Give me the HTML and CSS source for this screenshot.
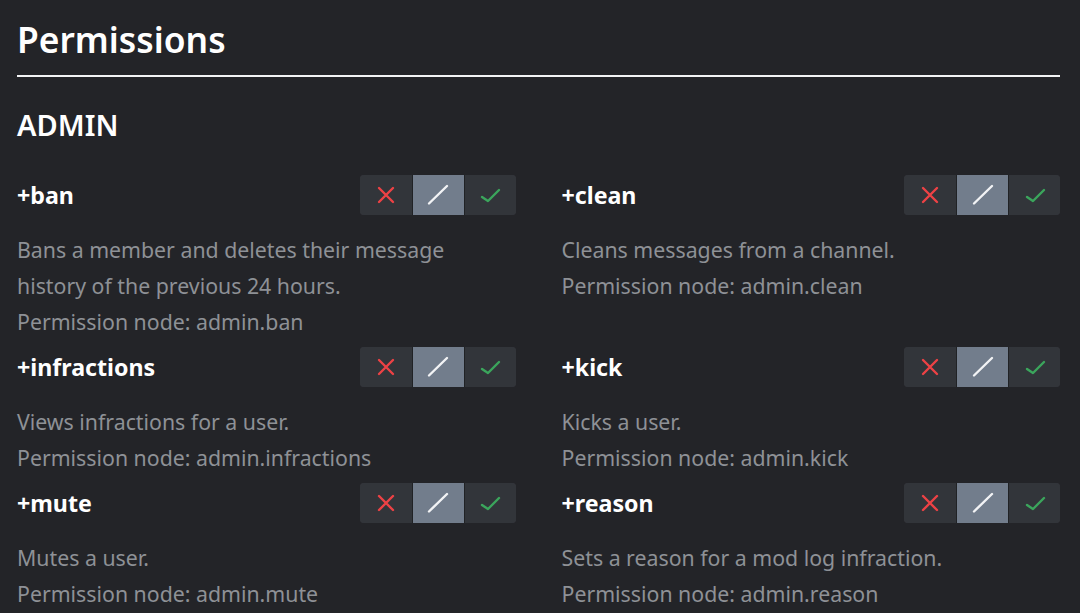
FILE: index.html
```html
<!DOCTYPE html>
<html lang="en">
  <head>
    <meta charset="UTF-8" />
    <title>Permissions</title>
    <link rel="stylesheet" href="styles.css">
  </head>
  <body>
    <main class="page">
      <h1 class="page-title">Permissions</h1>
      <section class="group">
        <h2 class="group-title">ADMIN</h2>
        <div class="perm-grid">
          <div class="perm">
            <div class="perm-head">
              <span class="perm-name">+ban</span>
              <div class="toggle">
                <button class="toggle-btn deny" aria-label="Deny">
                  <svg viewBox="0 0 24 24"><path d="M5 5 L19 19 M19 5 L5 19" /></svg>
                </button>
                <button class="toggle-btn neutral active" aria-label="Inherit">
                  <svg viewBox="0 0 24 24"><path d="M3 20.5 L21 3" /></svg>
                </button>
                <button class="toggle-btn allow" aria-label="Allow">
                  <svg viewBox="0 0 24 24"><path d="M4 14 L10 18 L21 7" /></svg>
                </button>
              </div>
            </div>
            <p class="perm-desc">Bans a member and deletes their message history of the previous 24 hours.</p>
            <p class="perm-desc">Permission node: admin.ban</p>
          </div>
          <div class="perm">
            <div class="perm-head">
              <span class="perm-name">+clean</span>
              <div class="toggle">
                <button class="toggle-btn deny" aria-label="Deny">
                  <svg viewBox="0 0 24 24"><path d="M5 5 L19 19 M19 5 L5 19" /></svg>
                </button>
                <button class="toggle-btn neutral active" aria-label="Inherit">
                  <svg viewBox="0 0 24 24"><path d="M3 20.5 L21 3" /></svg>
                </button>
                <button class="toggle-btn allow" aria-label="Allow">
                  <svg viewBox="0 0 24 24"><path d="M4 14 L10 18 L21 7" /></svg>
                </button>
              </div>
            </div>
            <p class="perm-desc">Cleans messages from a channel.</p>
            <p class="perm-desc">Permission node: admin.clean</p>
          </div>
          <div class="perm">
            <div class="perm-head">
              <span class="perm-name">+infractions</span>
              <div class="toggle">
                <button class="toggle-btn deny" aria-label="Deny">
                  <svg viewBox="0 0 24 24"><path d="M5 5 L19 19 M19 5 L5 19" /></svg>
                </button>
                <button class="toggle-btn neutral active" aria-label="Inherit">
                  <svg viewBox="0 0 24 24"><path d="M3 20.5 L21 3" /></svg>
                </button>
                <button class="toggle-btn allow" aria-label="Allow">
                  <svg viewBox="0 0 24 24"><path d="M4 14 L10 18 L21 7" /></svg>
                </button>
              </div>
            </div>
            <p class="perm-desc">Views infractions for a user.</p>
            <p class="perm-desc">Permission node: admin.infractions</p>
          </div>
          <div class="perm">
            <div class="perm-head">
              <span class="perm-name">+kick</span>
              <div class="toggle">
                <button class="toggle-btn deny" aria-label="Deny">
                  <svg viewBox="0 0 24 24"><path d="M5 5 L19 19 M19 5 L5 19" /></svg>
                </button>
                <button class="toggle-btn neutral active" aria-label="Inherit">
                  <svg viewBox="0 0 24 24"><path d="M3 20.5 L21 3" /></svg>
                </button>
                <button class="toggle-btn allow" aria-label="Allow">
                  <svg viewBox="0 0 24 24"><path d="M4 14 L10 18 L21 7" /></svg>
                </button>
              </div>
            </div>
            <p class="perm-desc">Kicks a user.</p>
            <p class="perm-desc">Permission node: admin.kick</p>
          </div>
          <div class="perm">
            <div class="perm-head">
              <span class="perm-name">+mute</span>
              <div class="toggle">
                <button class="toggle-btn deny" aria-label="Deny">
                  <svg viewBox="0 0 24 24"><path d="M5 5 L19 19 M19 5 L5 19" /></svg>
                </button>
                <button class="toggle-btn neutral active" aria-label="Inherit">
                  <svg viewBox="0 0 24 24"><path d="M3 20.5 L21 3" /></svg>
                </button>
                <button class="toggle-btn allow" aria-label="Allow">
                  <svg viewBox="0 0 24 24"><path d="M4 14 L10 18 L21 7" /></svg>
                </button>
              </div>
            </div>
            <p class="perm-desc">Mutes a user.</p>
            <p class="perm-desc">Permission node: admin.mute</p>
          </div>
          <div class="perm">
            <div class="perm-head">
              <span class="perm-name">+reason</span>
              <div class="toggle">
                <button class="toggle-btn deny" aria-label="Deny">
                  <svg viewBox="0 0 24 24"><path d="M5 5 L19 19 M19 5 L5 19" /></svg>
                </button>
                <button class="toggle-btn neutral active" aria-label="Inherit">
                  <svg viewBox="0 0 24 24"><path d="M3 20.5 L21 3" /></svg>
                </button>
                <button class="toggle-btn allow" aria-label="Allow">
                  <svg viewBox="0 0 24 24"><path d="M4 14 L10 18 L21 7" /></svg>
                </button>
              </div>
            </div>
            <p class="perm-desc">Sets a reason for a mod log infraction.</p>
            <p class="perm-desc">Permission node: admin.reason</p>
          </div>
        </div>
      </section>
    </main>
  </body>
</html>
```

FILE: styles.css
```css
html,
body {
  height: 100%;
}

body {
  margin: 0;
  background-color: #232428;
  color: #fff;
  font-family: "Noto Sans", "Open Sans", sans-serif;
}

.page {
  padding: 14px 20px 0 17px;
}

.page-title {
  margin: 0;
  padding-bottom: 10px;
  font-size: 35.4px;
  font-weight: 600;
  line-height: 51px;
  border-bottom: 2px solid #f2f3f5;
}

.group-title {
  margin: 23px 0 25px;
  font-size: 29px;
  font-weight: 600;
  line-height: 50px;
}

.perm-grid {
  display: grid;
  grid-template-columns: 1fr 1fr;
  column-gap: 46px;
}

.perm {
  padding-bottom: 7px;
}

.perm-head {
  display: flex;
  align-items: center;
  justify-content: space-between;
  margin-bottom: 17px;
}

.perm-name {
  font-size: 23.2px;
  font-weight: 700;
}

.perm-desc {
  margin: 0;
  color: #8e9196;
  font-size: 21.3px;
  line-height: 36px;
}

.toggle {
  display: flex;
  height: 40px;
  border-radius: 4px;
  overflow: hidden;
  background-color: #36393f;
}

.toggle-btn {
  width: 52px;
  height: 40px;
  padding: 0;
  border: none;
  background-color: #32353a;
  display: flex;
  align-items: center;
  justify-content: center;
  cursor: pointer;
}

.toggle-btn + .toggle-btn {
  border-left: 1px solid #202225;
}

.toggle-btn svg {
  width: 24px;
  height: 24px;
  fill: none;
  stroke-width: 2.4;
  stroke-linecap: round;
  stroke-linejoin: round;
}

.toggle-btn.active {
  background-color: #727d8c;
}

.deny svg {
  stroke: #ed4245;
}

.neutral svg {
  stroke: #f2f3f5;
}

.allow svg {
  stroke: #3ba55c;
}
```
